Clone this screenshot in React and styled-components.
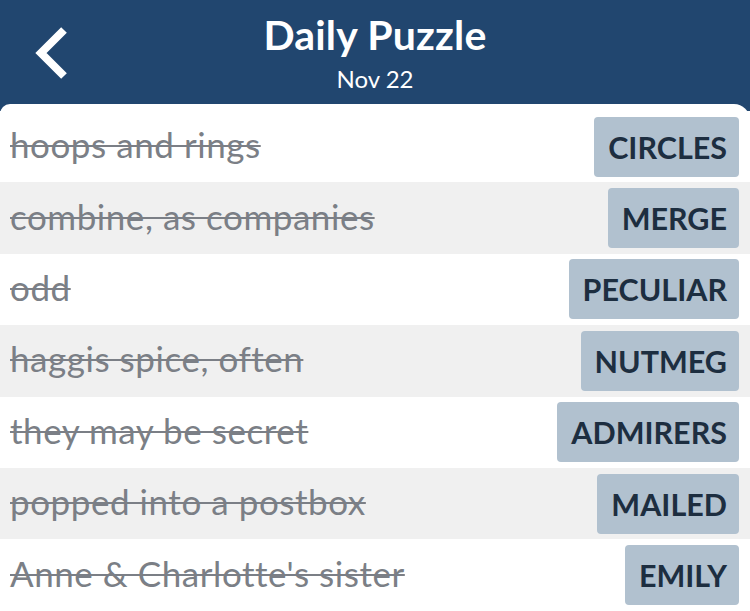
import React from "react";
import styled, { createGlobalStyle } from "styled-components";

const GlobalStyle = createGlobalStyle`
  html, body {
    margin: 0;
    padding: 0;
    background: #21466f;
    font-family: "Lato", "Open Sans", sans-serif;
  }
`;

const Screen = styled.div`
  width: 750px;
  height: 611px;
  overflow: hidden;
  background: #21466f;
  display: flex;
  flex-direction: column;
`;

const Header = styled.header`
  position: relative;
  height: 104px;
  display: flex;
  flex-direction: column;
  align-items: center;
  color: #fff;
`;

const BackButton = styled.button`
  position: absolute;
  left: 30px;
  top: 23px;
  width: 44px;
  height: 60px;
  padding: 0;
  border: none;
  background: none;
  cursor: pointer;
`;

const Title = styled.h1`
  margin: 10px 0 0;
  font-size: 41px;
  font-weight: 700;
  line-height: 50px;
  letter-spacing: 0.2px;
`;

const Subtitle = styled.div`
  font-size: 24px;
  line-height: 30px;
  margin-top: 4px;
`;

const Card = styled.main`
  flex: 1;
  background: #fff;
  border-radius: 10px 16px 0 0;
  padding-top: 7px;
`;

const Row = styled.div`
  height: 71.4px;
  display: flex;
  align-items: center;
  justify-content: space-between;
  padding: 0 11px 0 10px;
  background: ${(p) => (p.$shaded ? "#f0f0f0" : "#fff")};
`;

const Clue = styled.span`
  font-size: 35px;
  line-height: 40px;
  margin-top: -5px;
  color: #7b7f86;
  text-decoration: line-through;
  text-decoration-thickness: 2px;
  letter-spacing: 0.55px;
`;

const Answer = styled.span`
  height: 60px;
  display: flex;
  align-items: center;
  padding: 0 12px 0 14px;
  background: #b1c1cf;
  border-radius: 4px;
  color: #1d2e40;
  font-size: 30.5px;
  font-weight: 700;
  letter-spacing: 0;
`;

const rows = [
  ["hoops and rings", "CIRCLES"],
  ["combine, as companies", "MERGE"],
  ["odd", "PECULIAR"],
  ["haggis spice, often", "NUTMEG"],
  ["they may be secret", "ADMIRERS"],
  ["popped into a postbox", "MAILED"],
  ["Anne & Charlotte's sister", "EMILY"],
];

export default function App() {
  return (
    <Screen>
      <GlobalStyle />
      <Header>
        <BackButton aria-label="Back">
          <svg width="44" height="60" viewBox="0 0 44 60">
            <polyline
              points="34,7 11,30 34,53"
              fill="none"
              stroke="#fff"
              strokeWidth="8"
              strokeLinejoin="miter"
            />
          </svg>
        </BackButton>
        <Title>Daily Puzzle</Title>
        <Subtitle>Nov 22</Subtitle>
      </Header>
      <Card>
        {rows.map(([clue, answer], i) => (
          <Row key={answer} $shaded={i % 2 === 1}>
            <Clue>{clue}</Clue>
            <Answer>{answer}</Answer>
          </Row>
        ))}
      </Card>
    </Screen>
  );
}
